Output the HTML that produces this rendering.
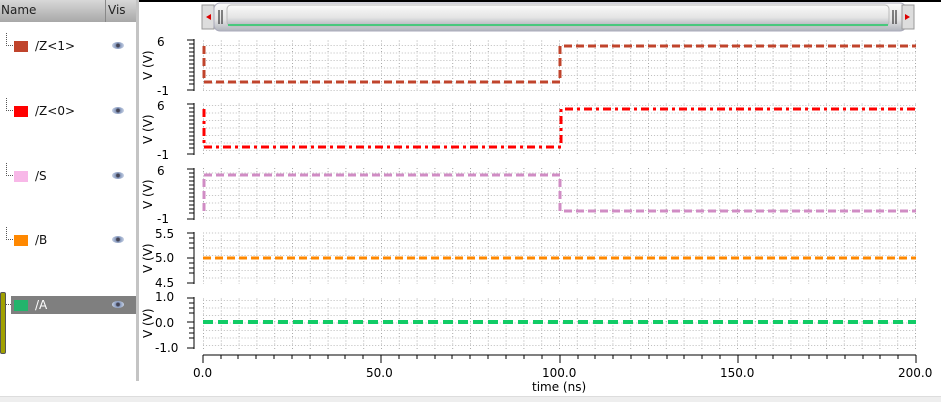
<!DOCTYPE html>
<html><head><style>
body{margin:0;width:941px;height:401px;overflow:hidden;background:#fff;font-family:"DejaVu Sans","Liberation Sans",sans-serif;position:relative}
.hdr{position:absolute;left:0;top:0;width:137px;height:22px;background:linear-gradient(#d8d8d8,#a8a8a8);font-size:12px;color:#222}
.row{position:absolute;left:11px;width:125px;height:18px;font-size:12px;color:#111}
.sw{position:absolute;left:3px;top:4px;width:14px;height:11px}
.lbl{position:absolute;left:24px;top:2px}
.eye{position:absolute;left:101px;top:5px;width:12px;height:7px;border-radius:50%;background:radial-gradient(circle,#445 0 1.5px,#8a9cc0 2.5px,#c8d2e4 6px)}
.dot{position:absolute;left:-5px;top:-4px;width:6px;height:12px;border-left:1px dotted #555;border-bottom:1px dotted #555}
</style></head><body>
<div style="position:absolute;left:138px;top:0;width:803px;height:2px;background:#000"></div>
<div class="hdr"><span style="position:absolute;left:1px;top:3px">Name</span><span style="position:absolute;left:105px;top:0;height:22px;border-left:1px solid #888"></span><span style="position:absolute;left:108px;top:3px">Vis</span></div>
<div style="position:absolute;left:136px;top:0;width:3px;height:381px;background:#c4c4c4"></div>
<div style="position:absolute;left:0;top:396px;width:941px;height:5px;background:#eee;border-top:1px solid #ddd"></div>
<div class="row" style="top:37px"><div class="dot"></div><div class="sw" style="background:#c0442c"></div><span class="lbl">/Z&lt;1&gt;</span><div class="eye"></div></div>
<div class="row" style="top:102px"><div class="dot"></div><div class="sw" style="background:#f00"></div><span class="lbl">/Z&lt;0&gt;</span><div class="eye"></div></div>
<div class="row" style="top:167px"><div class="dot"></div><div class="sw" style="background:#f8b8e8"></div><span class="lbl">/S</span><div class="eye"></div></div>
<div class="row" style="top:231px"><div class="dot"></div><div class="sw" style="background:#ff8800"></div><span class="lbl">/B</span><div class="eye"></div></div>
<div class="row" style="top:296px;background:#7f7f7f;color:#fff"><div class="dot" style="border-left:none;left:-8px;width:8px;top:-4px"></div><div class="sw" style="background:#22b46c"></div><span class="lbl">/A</span><div class="eye"></div></div>
<div style="position:absolute;left:0;top:292px;width:4px;height:60px;background:#a0a000;border:1px solid #555;border-radius:2px"></div>
<svg width="941" height="401" style="position:absolute;left:0;top:0" font-family="DejaVu Sans,Liberation Sans,sans-serif" font-size="12">
<defs>
<pattern id="g" x="203" y="0" width="17.8" height="7.5" patternUnits="userSpaceOnUse">
<line x1="0.5" y1="0" x2="0.5" y2="7.5" stroke="#aaa" stroke-dasharray="1 2"/>
<line x1="0" y1="0.5" x2="17.8" y2="0.5" stroke="#bbb" stroke-dasharray="1 2"/>
</pattern>
<linearGradient id="sb" x1="0" y1="0" x2="0" y2="1"><stop offset="0" stop-color="#fafafa"/><stop offset=".6" stop-color="#e4e4e4"/><stop offset="1" stop-color="#b0b4bc"/></linearGradient>
</defs>
<rect x="202" y="5" width="12" height="24" fill="#ddd" stroke="#999"/><path d="M206 17l5-3v6z" fill="#d00"/>
<rect x="214" y="3" width="692" height="28" rx="6" fill="url(#sb)" stroke="#aab"/>
<rect x="227" y="5" width="662" height="21" rx="4" fill="url(#sb)" stroke="#bbb"/>
<line x1="228" y1="25" x2="888" y2="25" stroke="#2c6" stroke-width="1.5"/>
<path d="M219 10v14M222 10v14M893 10v14M896 10v14" stroke="#111"/>
<rect x="902" y="5" width="12" height="24" fill="#ddd" stroke="#999"/><path d="M905 14l5 3-5 3z" fill="#d00"/>
<g>
<rect x="203" y="39" width="713" height="52" fill="url(#g)"/>
<rect x="203" y="103" width="713" height="52" fill="url(#g)"/>
<rect x="203" y="168" width="713" height="52" fill="url(#g)"/>
<rect x="203" y="232" width="713" height="52" fill="url(#g)"/>
<rect x="203" y="297" width="713" height="52" fill="url(#g)"/>
</g>
<g stroke="#000">
<path d="M194 39v52M194 103v52M194 168v52M194 232v52M194 297v52"/>
<path d="M187 40h7M189 44h5M189 48h5M189 52h5M189 56h5M189 60h5M189 64h5M189 68h5M189 72h5M189 76h5M189 80h5M189 84h5M187 90h7"/>
<path d="M187 104h7M189 108h5M189 112h5M189 116h5M189 120h5M189 124h5M189 128h5M189 132h5M189 136h5M189 140h5M189 144h5M189 148h5M187 154h7"/>
<path d="M187 169h7M189 173h5M189 177h5M189 181h5M189 185h5M189 189h5M189 193h5M189 197h5M189 201h5M189 205h5M189 209h5M189 213h5M187 219h7"/>
<path d="M187 233h7M189 238h5M189 243h5M189 248h5M187 258h7M189 263h5M189 268h5M189 273h5M187 283h7"/>
<path d="M187 298h7M189 303h5M189 308h5M189 313h5M187 322h7M189 328h5M189 333h5M189 338h5M187 348h7"/>
<path d="M203 355h713M203 355v8M381 355v8M560 355v8M738 355v8M916 355v8M221 355v4M238 355v4M256 355v4M274 355v4M292 355v4M310 355v4M328 355v4M345 355v4M363 355v4M399 355v4M417 355v4M435 355v4M452 355v4M470 355v4M488 355v4M506 355v4M524 355v4M542 355v4M578 355v4M595 355v4M613 355v4M631 355v4M649 355v4M667 355v4M684 355v4M702 355v4M720 355v4M756 355v4M773 355v4M791 355v4M809 355v4M827 355v4M845 355v4M863 355v4M880 355v4M898 355v4"/>
</g>
<g fill="#000">
<text x="157" y="46">6</text><text x="157" y="95">-1</text>
<text x="157" y="110">6</text><text x="157" y="159">-1</text>
<text x="157" y="175">6</text><text x="157" y="223">-1</text>
<text x="155" y="238">5.5</text><text x="155" y="262">5.0</text><text x="155" y="287">4.5</text>
<text x="155" y="301">1.0</text><text x="155" y="327">0.0</text><text x="155" y="352">-1.0</text>
<text x="193" y="377">0.0</text><text x="366" y="377">50.0</text><text x="542" y="377">100.0</text><text x="720" y="377">150.0</text><text x="898" y="377">200.0</text>
<text x="532" y="391">time (ns)</text>
<g transform="rotate(-90)"><text x="-80" y="152">V (V)</text><text x="-144" y="152">V (V)</text><text x="-209" y="152">V (V)</text><text x="-273" y="152">V (V)</text><text x="-338" y="152">V (V)</text></g>
</g>
<g fill="none" stroke-width="3">
<path d="M204 46v36H560V46h356" stroke="#c0442c" stroke-dasharray="8 4"/>
<path d="M204 109v38H561V109h355" stroke="#f00" stroke-dasharray="8 4 3 4"/>
<path d="M204 211v-36H560v36h356" stroke="#d08cc4" stroke-dasharray="8 4"/>
<path d="M203 258h713" stroke="#ff8800" stroke-dasharray="8 4"/>
<path d="M203 322h713" stroke="#11cc66" stroke-width="4" stroke-dasharray="10 5"/>
</g>
</svg>
</body></html>
